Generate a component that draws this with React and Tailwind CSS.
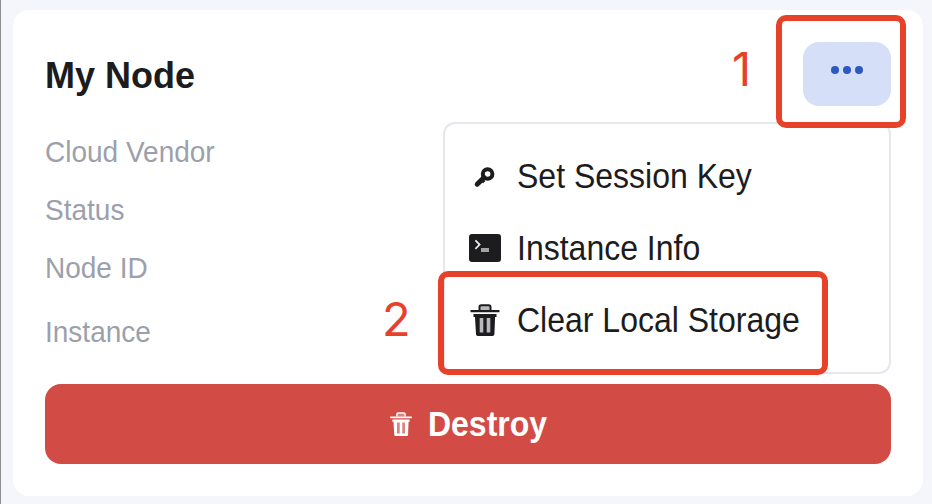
function KeyIcon() {
  return (
    <svg viewBox="0 0 32 32" className="h-8 w-8 shrink-0" fill="none" stroke="currentColor">
      <circle cx="18.6" cy="14" r="4.800" strokeWidth="4" />
      <path d="M15 17.600 8.200 24.200" strokeWidth="5" strokeLinecap="round" strokeDasharray="9.500" />
      <path d="m12 19 3.200 3.200" strokeWidth="3" />
    </svg>
  );
}

function TerminalIcon() {
  return (
    <svg viewBox="0 0 32 32" className="h-8 w-8 shrink-0" fill="none">
      <rect x="0" y="2" width="32" height="28" rx="3" fill="currentColor" />
      <path d="m6.4 8.4 4.2 4.2-4.2 4.2" stroke="#eee" strokeWidth="1.7" />
      <path d="M12 18h8" stroke="#a2a2a4" strokeWidth="4" />
    </svg>
  );
}

function TrashIcon({ className, inner }) {
  return (
    <svg viewBox="0 0 32 32" className={className} fill="currentColor">
      <path d="M10.5 6V3Q10.5 1.2 12.3 1.2h7.4Q21.5 1.2 21.5 3V6" fill={inner} stroke="currentColor" strokeWidth="2" />
      <rect x="1.5" y="6" width="29" height="2.2" rx=".5" />
      <path d="M4.5 10h23v3h-1.4L25.4 30.3Q25.2 32 23.6 32H8.8Q7.2 32 7 30.3L6 13H4.5Z" />
      <path d="M10.7 14h3.6v14.5h-3.6zM17.7 14h3.6v14.5h-3.6z" fill={inner} />
    </svg>
  );
}

function MenuItem({ icon, label }) {
  return (
    <div className="flex h-[72px] items-center gap-4 pl-6">
      {icon}
      <span className="scale-y-[1.08]">{label}</span>
    </div>
  );
}

function Label({ className, children }) {
  return (
    <div className={`flex items-center ${className}`}>
      <span className="scale-y-[1.06]">{children}</span>
    </div>
  );
}

export default function App() {
  return (
    <div className="relative h-[504px] w-[932px] overflow-hidden border-l border-[#8e8e92] bg-[#f5f6fb] pt-[10px] pl-3 font-['Liberation_Sans',Arial,sans-serif]">
      <main className="h-[486px] w-[910px] rounded-2xl bg-white px-8 pt-8">
        <header className="flex h-16 items-center justify-between">
          <h1 className="scale-y-[1.05] pt-0.5 text-[36px] leading-[44px] font-bold text-[#1c1c1e]">My Node</h1>
          <div className="relative">
            <button className="flex h-16 w-[88px] items-start justify-center gap-1 rounded-2xl bg-[#d6dff8] pt-6">
              <span className="h-2 w-2 rounded-full bg-[#2f57c0]" />
              <span className="h-2 w-2 rounded-full bg-[#2f57c0]" />
              <span className="h-2 w-2 rounded-full bg-[#2f57c0]" />
            </button>
            <div className="absolute top-20 right-0 h-[252px] w-[448px] rounded-xl border-2 border-[#e5e7ee] bg-white py-4 text-[32px] leading-10 text-[#1c1c1e]">
              <MenuItem icon={<KeyIcon />} label="Set Session Key" />
              <MenuItem icon={<TerminalIcon />} label="Instance Info" />
              <MenuItem icon={<TrashIcon className="h-8 w-8 shrink-0" inner="#b8b8bc" />} label="Clear Local Storage" />
            </div>
          </div>
        </header>
        <div className="flex flex-col pt-[17px] text-[28px] text-[#9ca0ab]">
          <Label className="h-[58px]">Cloud Vendor</Label>
          <Label className="h-[58px]">Status</Label>
          <Label className="h-[58px]">Node ID</Label>
          <Label className="h-[70px]">Instance</Label>
        </div>
        <button className="mt-[17px] flex h-20 w-[846px] items-center justify-center gap-[15px] rounded-2xl bg-[#d24b45] text-[32px] font-bold text-white">
          <TrashIcon className="h-6 w-6" inner="#dd827e" />
          <span className="scale-y-[1.08]">Destroy</span>
        </button>
      </main>

      <div className="absolute top-[15px] left-[775px] h-[113px] w-[130px] rounded-[10px] border-6 border-[#e8412a]" />
      <div className="absolute top-[271px] left-[437px] h-[104px] w-[390px] rounded-[10px] border-6 border-[#e8412a]" />
      <span className="absolute top-[45px] left-[731px] font-['Inter',sans-serif] text-[47px] leading-[48px] text-[#e8412a]">1</span>
      <span className="absolute top-[295px] left-[381px] font-['Inter',sans-serif] text-[47px] leading-[48px] text-[#e8412a]">2</span>
    </div>
  );
}
